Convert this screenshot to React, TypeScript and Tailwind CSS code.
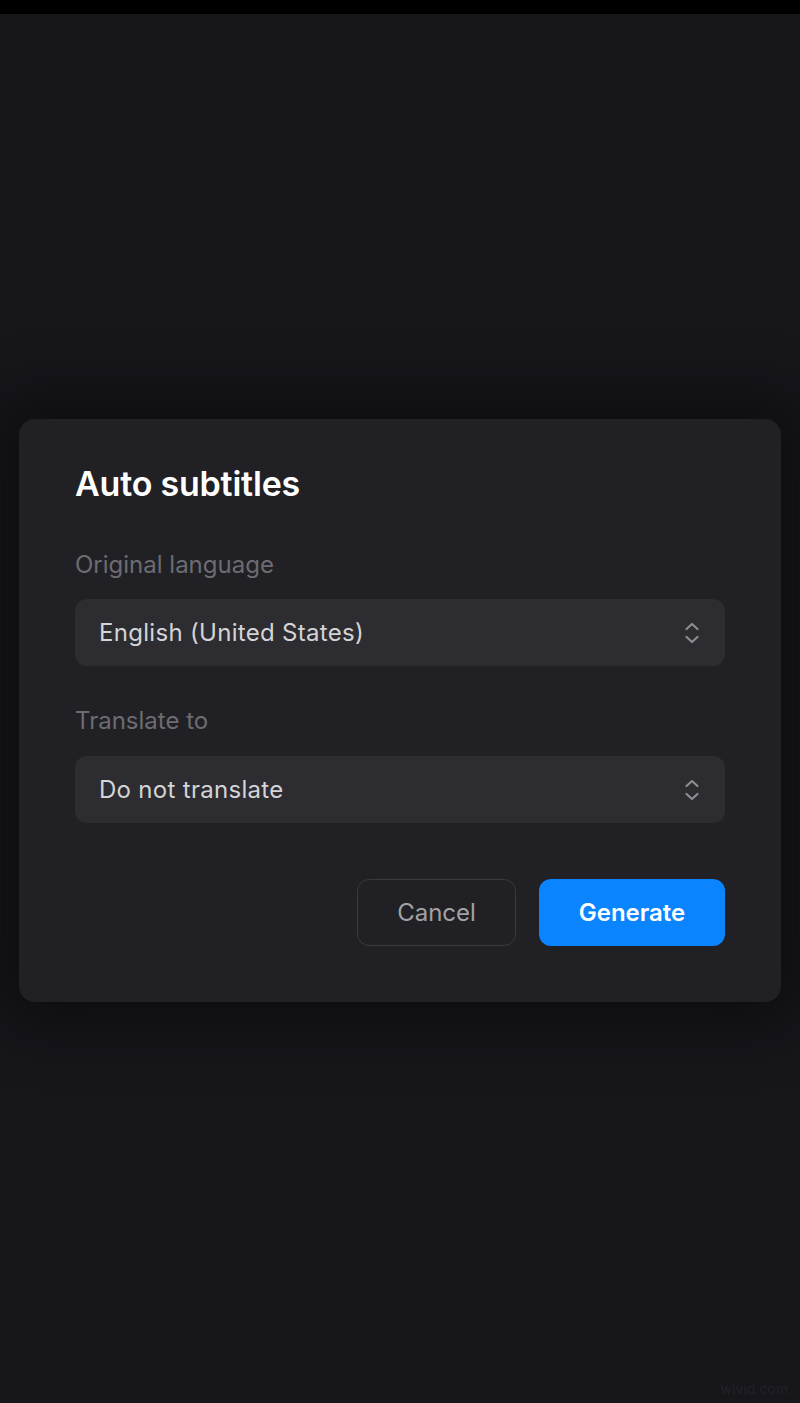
import React from "react";

function Chevrons() {
  return (
    <svg width="18" height="28" viewBox="0 0 18 28" fill="none" className="shrink-0">
      <path d="M3.5 10 L9 5 L14.5 10" stroke="#8d8d92" strokeWidth="2.2" strokeLinecap="round" strokeLinejoin="round" />
      <path d="M3.5 18 L9 23 L14.5 18" stroke="#8d8d92" strokeWidth="2.2" strokeLinecap="round" strokeLinejoin="round" />
    </svg>
  );
}

function Select({ value }: { value: string }) {
  return (
    <div className="flex h-[67px] items-center justify-between rounded-[12px] bg-[#2c2c31] pl-[24px] pr-[24px]">
      <span className="text-[24px] leading-[32px] tracking-[0.3px] text-[#d4d4d8]">{value}</span>
      <Chevrons />
    </div>
  );
}

export default function App() {
  return (
    <div
      className="relative flex min-h-[1403px] w-[800px] flex-col bg-[#16161b]"
      style={{ fontFamily: "Inter, 'Noto Sans', sans-serif" }}
    >
      <div className="h-[14px] w-full bg-black" />
      <div className="mx-[19px] mt-[405px] rounded-[16px] bg-[#212125] px-[56px] pb-[56px] pt-[45px] shadow-[0_0_60px_20px_rgba(8,8,10,0.6)]">
        <h1 className="text-[34px] font-semibold leading-[40px] tracking-[-0.2px] text-white">Auto subtitles</h1>
        <div className="mt-[45px] text-[24px] leading-[32px] text-[#6c6c72]">Original language</div>
        <div className="mt-[18px]">
          <Select value="English (United States)" />
        </div>
        <div className="mt-[39px] text-[24px] leading-[32px] text-[#6c6c72]">Translate to</div>
        <div className="mt-[19px]">
          <Select value="Do not translate" />
        </div>
        <div className="mt-[56px] flex justify-end gap-[23px]">
          <button className="flex h-[67px] w-[159px] items-center justify-center rounded-[12px] border border-[#3a3a3f] text-[24px] text-[#a1a1a6]">
            Cancel
          </button>
          <button className="flex h-[67px] w-[186px] items-center justify-center rounded-[12px] bg-[#0a84ff] text-[24px] font-semibold text-white">
            Generate
          </button>
        </div>
      </div>
      <div className="absolute bottom-[4px] right-[12px] text-[14px] text-[#222226]">wlvid.com</div>
    </div>
  );
}
